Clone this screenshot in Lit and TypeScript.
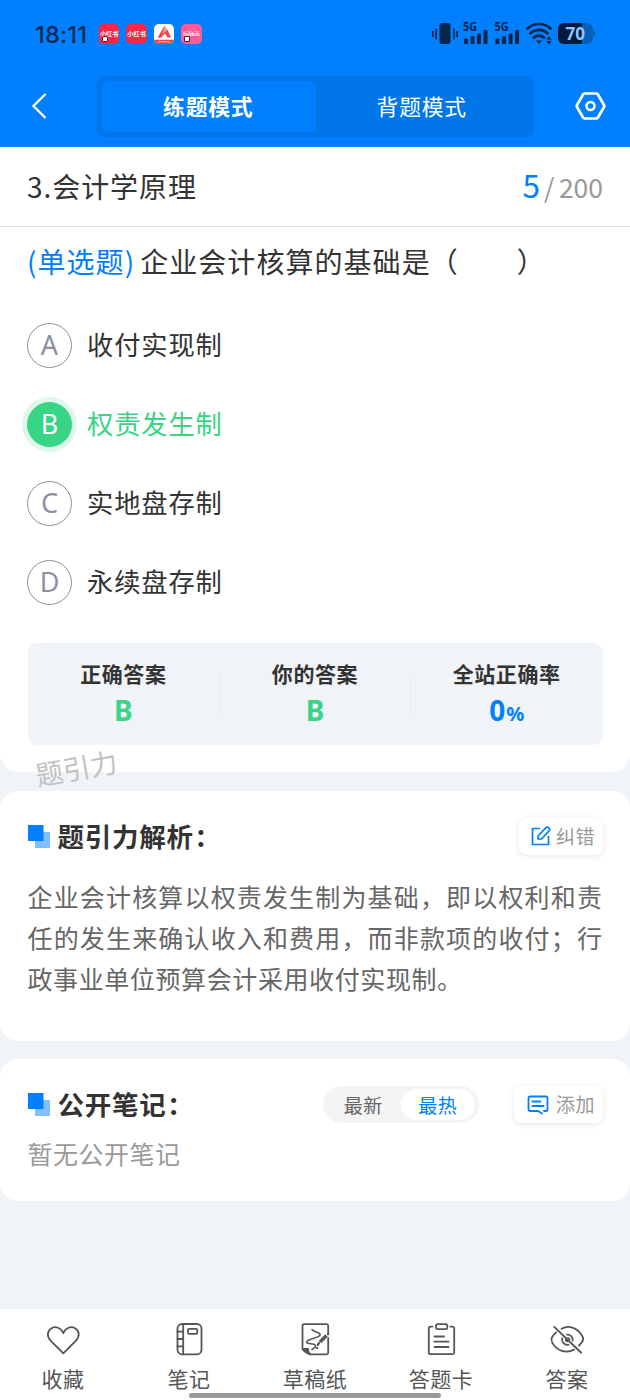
import { LitElement, html, css, svg } from "lit";
import { customElement } from "lit/decorators.js";
import { classMap } from "lit/directives/class-map.js";

const shared = css`
  * { box-sizing: border-box; }
  svg { display: block; fill: none; flex: none; }
`;

@customElement("status-bar")
class StatusBar extends LitElement {
  static styles = [shared, css`
    :host { display: flex; align-items: center; height: 68px; padding: 0 35.5px 0 35px; color: #06264d; }
    .time { font: 500 23.5px/30px Inter, sans-serif; letter-spacing: 0.2px; width: 64px; padding-top: 1px; white-space: nowrap; }
    .apps { display: flex; gap: 7px; flex: 1; }
    .app { position: relative; width: 20.4px; height: 20.4px; border-radius: 5px; background: #fb2545; color: #fff; font: 700 6.2px/20px "Noto Sans CJK SC", sans-serif; text-align: center; white-space: nowrap; }
    .app.white { background: #fff; overflow: hidden; }
    .app.pink { background: #fd5c9a; font-size: 5.2px; }
    .app.dual::after { content: ""; position: absolute; left: 3px; bottom: 2px; width: 4px; height: 4px; background: #fff; border: 1px solid #5a1020; border-radius: 1px; }
    .signals { overflow: visible; }
    .net { font: 700 11.500px "Noto Sans", sans-serif; fill: #06264d; }
    .level { font: 700 17px "Noto Sans", sans-serif; fill: #8fc4ff; }
  `];
  render() {
    const bars = (x: number) => svg`
      <text class="net" x=${x} y="9" textLength="14" lengthAdjust="spacingAndGlyphs">5G</text>
      <g fill="#06264d">
        <rect x=${x + 1} y="16.5" width="4" height="5.500" rx="1"/>
        <rect x=${x + 7.5} y="14" width="4" height="8" rx="1"/>
        <rect x=${x + 14} y="11.5" width="4" height="10.5" rx="1"/>
        <rect x=${x + 20.5} y="8" width="4" height="14" rx="1"/>
      </g>`;
    return html`
      <span class="time">18:11</span>
      <div class="apps">
        <span class="app dual">小红书</span>
        <span class="app">小红书</span>
        <span class="app white">
          <svg width="20.4" height="20.4" viewBox="0 0 20 20">
            <path d="M3.500 13.500 10 2l3.200 3.600L16.800 13l-3.300.6-2.800-4.400L7 13.400z" fill="#f24550"/>
            <path d="M10.4 3 13 6l-5 4z" fill="#fba0a0"/>
            <path d="M0 15.5h20V20H0z" fill="#ef3f4c"/>
            <path d="M4 17.5h12" stroke="#fbb" stroke-width="1"/>
          </svg>
        </span>
        <span class="app pink dual">bilibili</span>
      </div>
      <svg class="signals" width="163" height="24" viewBox="0 0 163 24">
        <g fill="#06264d">
          <rect x="7.5" y="1" width="11" height="21" rx="2.5"/>
          <path d="M0 9h1.600v6H0zM3.200 6.500h1.800v11H3.200zM21 6.500h1.800v11H21zM24.300 9h1.600v6h-1.600z"/>
        </g>
        ${bars(31)} ${bars(62.500)}
        <g stroke="#06264d" stroke-width="2.7" stroke-linecap="round">
          <path d="M95.500 6.500a17 17 0 0 1 23 0"/>
          <path d="M98.500 11.300a12.500 12.500 0 0 1 17 0"/>
          <path d="M101.800 15.800a7.500 7.500 0 0 1 10.400 0"/>
        </g>
        <path d="M104 18.500h6l-3 3.500zM114.300 17.500l2.700-3.500 2.700 3.500zM114.300 19l2.700 3.500 2.700-3.500z" fill="#06264d"/>
        <rect x="126" y="1" width="35" height="21" rx="6" fill="#0660b8"/>
        <path d="M132 1h18v21h-18a6 6 0 0 1-6-6V7a6 6 0 0 1 6-6z" fill="#021a38"/>
        <path d="M161.800 8.500a5 5 0 0 1 0 6z" fill="#0660b8" stroke="#0660b8"/>
        <text class="level" x="133.500" y="17.700" textLength="19.500" lengthAdjust="spacingAndGlyphs">70</text>
      </svg>`;
  }
}

@customElement("mode-bar")
class ModeBar extends LitElement {
  static styles = [shared, css`
    :host { display: flex; align-items: center; height: 79px; padding: 0 24.5px 2px 31px; }
    .back { width: 66px; padding-bottom: 1px; }
    .tabs { display: flex; width: 437px; height: 61px; padding: 5px; border-radius: 8px; background: #0076e8; }
    .tab { flex: 1; display: grid; place-items: center; border-radius: 7px; color: #fff; font-size: 21.8px; line-height: 30px; letter-spacing: 0.8px; padding: 0 1px 2px 0; }
    .tab.on { background: #0080ff; font-weight: 700; }
    .gear { margin-left: auto; margin-bottom: 1px; }
  `];
  render() {
    return html`
      <div class="back">
        <svg width="18" height="28" viewBox="0 0 18 28"><path d="M14.500 2 2.500 14l12 12" stroke="#fff" stroke-width="2.300"/></svg>
      </div>
      <div class="tabs"><div class="tab on">练题模式</div><div class="tab">背题模式</div></div>
      <svg class="gear" width="31" height="28" viewBox="0 0 31 28">
        <path d="M9.500 1.500h12a1.500 1.500 0 0 1 1.300.8l6.200 10.700a2 2 0 0 1 0 2l-6.200 10.700a1.500 1.500 0 0 1-1.300.8h-12a1.500 1.500 0 0 1-1.300-.8L2 15a2 2 0 0 1 0-2L8.200 2.300a1.500 1.500 0 0 1 1.300-.8z" stroke="#fff" stroke-width="2.700"/>
        <circle cx="15.500" cy="14" r="4" stroke="#fff" stroke-width="2.600"/>
      </svg>`;
  }
}

@customElement("tool-bar")
class ToolBar extends LitElement {
  static styles = [shared, css`
    :host { display: grid; grid-template-columns: repeat(5, 1fr); height: 91px; padding-top: 13px; background: #fff; color: #555; position: relative; }
    .item { display: flex; flex-direction: column; align-items: center; font-size: 21px; line-height: 30px; letter-spacing: 0.5px; gap: 5px; }
    svg { stroke: #555; stroke-width: 1.800; stroke-linecap: round; stroke-linejoin: round; }
    .home { position: absolute; left: 189px; bottom: 2px; width: 252px; height: 5px; border-radius: 3px; background: #999; }
  `];
  items = [
    { label: "收藏", icon: svg`<path d="M18.300 31.300 5.600 18.600C1 14 2.800 8.400 6.500 6.200c4.200-2.400 9.400-.5 11.800 4.900 2.400-5.400 7.600-7.300 11.800-4.900 3.700 2.200 5.500 7.800.9 12.400z"/>` },
    { label: "笔记", icon: svg`<rect x="6.500" y="2" width="24" height="30.300" rx="4.500"/><path d="M12.200 2v30M6.500 9.700h5.500M6.500 17h5.500M6.500 24.300h5.500"/><rect x="17" y="6.800" width="9.300" height="5" rx="1"/>` },
    { label: "草稿纸", icon: svg`<path d="M5.500 25V4a1.800 1.800 0 0 1 1.800-1.800h22A1.800 1.800 0 0 1 31.200 4v7M31.200 16v14.500a1.800 1.800 0 0 1-1.800 1.800H13"/><path d="M5.500 26.500c2 .8 4 .2 5.500.2-.5 2 .5 4 2 5.600-2 0-7.500-4-7.500-5.800z" fill="#555"/><path d="M15 7.500c2.500 3 7 2.500 8 4.500 1.500 4-13 4.500-13.500 8 0 3 8.500.5 9 3.500.3 2-2 3-3.500 4" stroke-width="1.600"/><path d="m29.500 13.500-6.500 6.500" stroke-width="3.400" stroke-linecap="butt"/><path d="m22 21-1.200 2M31 12.300l.3-.3" stroke-width="2.200"/><path d="M19.500 26h1"/>` },
    { label: "答题卡", icon: svg`<path d="M9.500 4.600h-2A1.800 1.800 0 0 0 5.800 6.400v24A1.800 1.800 0 0 0 7.600 32.200h21.800a1.800 1.800 0 0 0 1.800-1.800v-24a1.800 1.800 0 0 0-1.800-1.800h-2"/><rect x="13" y="2.200" width="11.300" height="5" rx="1.500"/><path d="M11.500 14.500h9.500M11.500 19.700h14M11.500 25h14"/>` },
    { label: "答案", icon: svg`<path d="M12.500 6.700c8-4 16-.7 20.500 6.800 2.200 3.600 1.500 5.500-3 10.200M25 27.600c-8.500 4.500-17 1-21.500-6.500C1.400 17.500 2 15 7.200 10.300"/><path d="m5.200 4.900 27 25.800" stroke-width="1.900"/><path d="M18 12.700a5.200 5.200 0 0 1 5.700 6M19.500 22.700a5.300 5.300 0 0 1-6.300-6.500M19 16a2.300 2.300 0 0 1 1.500 1.500M18.500 19.300a2 2 0 0 1-1.800-1.600"/>` },
  ];
  render() {
    return html`
      ${this.items.map((i) => html`<div class="item"><svg width="36" height="36" viewBox="0 0 36 36">${i.icon}</svg><span>${i.label}</span></div>`)}
      <div class="home"></div>`;
  }
}

@customElement("app-root")
class AppRoot extends LitElement {
  static styles = [shared, css`
    :host { display: flex; flex-direction: column; width: 630px; height: 1400px; overflow: hidden; background: #f0f4f8; color: #333; font-family: "Noto Sans CJK SC", sans-serif; }
    .top { background: #0080ff; height: 147px; }
    .bar { display: flex; justify-content: space-between; align-items: center; height: 80px; padding: 0 27px 2px 27px; background: #fff; border-bottom: 1px solid #dcdcdc; }
    .course { font-size: 28px; line-height: 40px; letter-spacing: 0.95px; }
    .count { display: flex; align-items: baseline; color: #999; font-size: 26.5px; line-height: 40px; }
    .now { color: #0080ff; font-size: 31.500px; margin-right: 4px; }
    .slash { margin-right: 4.500px; }
    .question { position: relative; height: 545px; padding: 13px 27px 0; background: #fff; border-radius: 0 0 18px 18px; }
    .stem { font-size: 28px; line-height: 42px; letter-spacing: 1.050px; white-space: pre; }
    .kind { color: #0080ff; margin-right: 5px; }
    .gap { margin-left: -1px; }
    .options { display: flex; flex-direction: column; gap: 34px; margin-top: 41px; }
    .option { display: flex; align-items: center; height: 45px; gap: 15px; font-size: 26.300px; letter-spacing: 0.850px; line-height: 40px; }
    .label { padding-bottom: 3px; }
    .dot { width: 45px; height: 45px; border-radius: 50%; border: 1.500px solid #8f8fa3; color: #8f8fa3; display: grid; place-items: center; font-family: "Noto Sans", sans-serif; font-size: 27px; line-height: 40px; letter-spacing: 0; padding-bottom: 1px; }
    .right { color: #38d585; }
    .right .dot { background: #38d585; border-color: #38d585; color: #fff; box-shadow: 0 0 0 5px #dff8eb; }
    .stats { display: grid; grid-template-columns: repeat(3, 1fr); height: 102px; margin: 38px 0 0 1px; width: 575px; border-radius: 9px; background: #f0f4f8; }
    .stat { text-align: center; padding: 14px 1px 0 0; font-weight: 700; font-size: 21px; line-height: 32px; letter-spacing: 0.600px; background: linear-gradient(#e9edf1, #e9edf1) right 30px / 1px 40px no-repeat; }
    .stat:last-child { background: none; }
    .value { font-family: "Noto Sans", sans-serif; font-size: 28px; line-height: 43px; letter-spacing: 0; color: #38d585; }
    .value.rate { color: #0080ff; }
    .unit { font-size: 20px; margin-left: 1px; }
    .mark { position: absolute; left: 35px; top: 520px; font-size: 27.500px; line-height: 40px; color: #c2c2c2; transform: rotate(-10deg); white-space: nowrap; }
    .card { background: #fff; border-radius: 18px; padding: 27px 27px 0 27.500px; }
    .analysis { margin-top: 19px; height: 250px; }
    .notes { margin-top: 18px; height: 142px; }
    .head { display: flex; align-items: center; height: 37px; }
    .title { font-size: 26.500px; font-weight: 700; line-height: 37px; letter-spacing: 0.750px; margin-left: 8px; padding-bottom: 2px; white-space: nowrap; }
    .colon { margin-left: 0.500px; }
    .fill { flex: 1; }
    .btn { display: flex; align-items: center; height: 37px; border-radius: 8px; background: #fff; box-shadow: 0 1px 6px rgba(0, 0, 0, 0.1); color: #999; font-size: 19px; line-height: 30px; letter-spacing: 0.500px; white-space: nowrap; }
    .btn span { padding-bottom: 2px; }
    .btn svg { margin-bottom: 2px; }
    .fix { width: 84px; padding-left: 11px; gap: 4px; }
    .add { width: 89px; padding-left: 13px; gap: 7px; margin-left: 35px; }
    .add svg { margin-bottom: 0; }
    .para { margin: 21px 0 0; width: 575px; font-size: 25px; letter-spacing: 0.600px; line-height: 41px; color: #666; text-align: justify; }
    .sort { display: flex; width: 156px; height: 37px; padding: 3px 4px 3px 3px; border-radius: 19px; background: #f4f4f4; font-size: 19px; line-height: 31px; letter-spacing: 0.500px; color: #666; }
    .tab { flex: 1; text-align: center; border-radius: 16px; }
    .tab.on { background: #fff; color: #0080ff; }
    .empty { font-size: 25px; line-height: 36px; letter-spacing: 0.500px; color: #999; margin-top: 12px; }
    .foot { margin-top: auto; }
  `];
  options = [
    { key: "A", text: "收付实现制" },
    { key: "B", text: "权责发生制", right: true },
    { key: "C", text: "实地盘存制" },
    { key: "D", text: "永续盘存制" },
  ];
  squares = html`<svg width="22" height="23" viewBox="0 0 22 23"><path d="M7 7h15v16H7z" fill="#80c0ff"/><path d="M0 0h15.500v16H0z" fill="#0080ff"/></svg>`;
  render() {
    return html`
      <header class="top"><status-bar></status-bar><mode-bar></mode-bar></header>
      <div class="bar">
        <span class="course">3.会计学原理</span>
        <span class="count"><span class="now">5</span><span class="slash">/</span><span>200</span></span>
      </div>
      <section class="question">
        <div class="stem"><span class="kind">(单选题)</span>企业会计核算的基础是<span class="gap">（　　）</span></div>
        <div class="options">
          ${this.options.map((o) => html`
            <div class=${classMap({ option: true, right: !!o.right })}><span class="dot">${o.key}</span><span class="label">${o.text}</span></div>`)}
        </div>
        <div class="stats">
          <div class="stat">正确答案<div class="value">B</div></div>
          <div class="stat">你的答案<div class="value">B</div></div>
          <div class="stat">全站正确率<div class="value rate">0<span class="unit">%</span></div></div>
        </div>
        <span class="mark">题引力</span>
      </section>
      <section class="card analysis">
        <div class="head">
          ${this.squares}<span class="title">题引力解析<span class="colon">：</span></span><span class="fill"></span>
          <div class="btn fix">
            <svg width="22" height="22" viewBox="0 0 22 22" stroke="#0080ff" stroke-width="1.700" stroke-linejoin="round"><path d="M10 3.500H2.500v16h16V11"/><path d="m8 11 8.500-8.800a1 1 0 0 1 1.400 0L19.500 4a1 1 0 0 1 0 1.400L11.500 14H8z"/></svg>
            <span>纠错</span>
          </div>
        </div>
        <p class="para">企业会计核算以权责发生制为基础，即以权利和责任的发生来确认收入和费用，而非款项的收付；行政事业单位预算会计采用收付实现制。</p>
      </section>
      <section class="card notes">
        <div class="head">
          ${this.squares}<span class="title">公开笔记<span class="colon">：</span></span><span class="fill"></span>
          <div class="sort"><span class="tab">最新</span><span class="tab on">最热</span></div>
          <div class="btn add">
            <svg width="22" height="20" viewBox="0 0 22 20" stroke="#0080ff" stroke-width="1.800" stroke-linecap="round" stroke-linejoin="round"><path d="M11 16H3.200A1.700 1.700 0 0 1 1.500 14.300V3.200A1.700 1.700 0 0 1 3.200 1.500h15.600a1.700 1.700 0 0 1 1.700 1.700v11.100a1.700 1.700 0 0 1-1.700 1.700H17M11 16l4 2.500M5.500 6.500h8M5.500 11h11"/></svg>
            <span>添加</span>
          </div>
        </div>
        <div class="empty">暂无公开笔记</div>
      </section>
      <tool-bar class="foot"></tool-bar>`;
  }
}
